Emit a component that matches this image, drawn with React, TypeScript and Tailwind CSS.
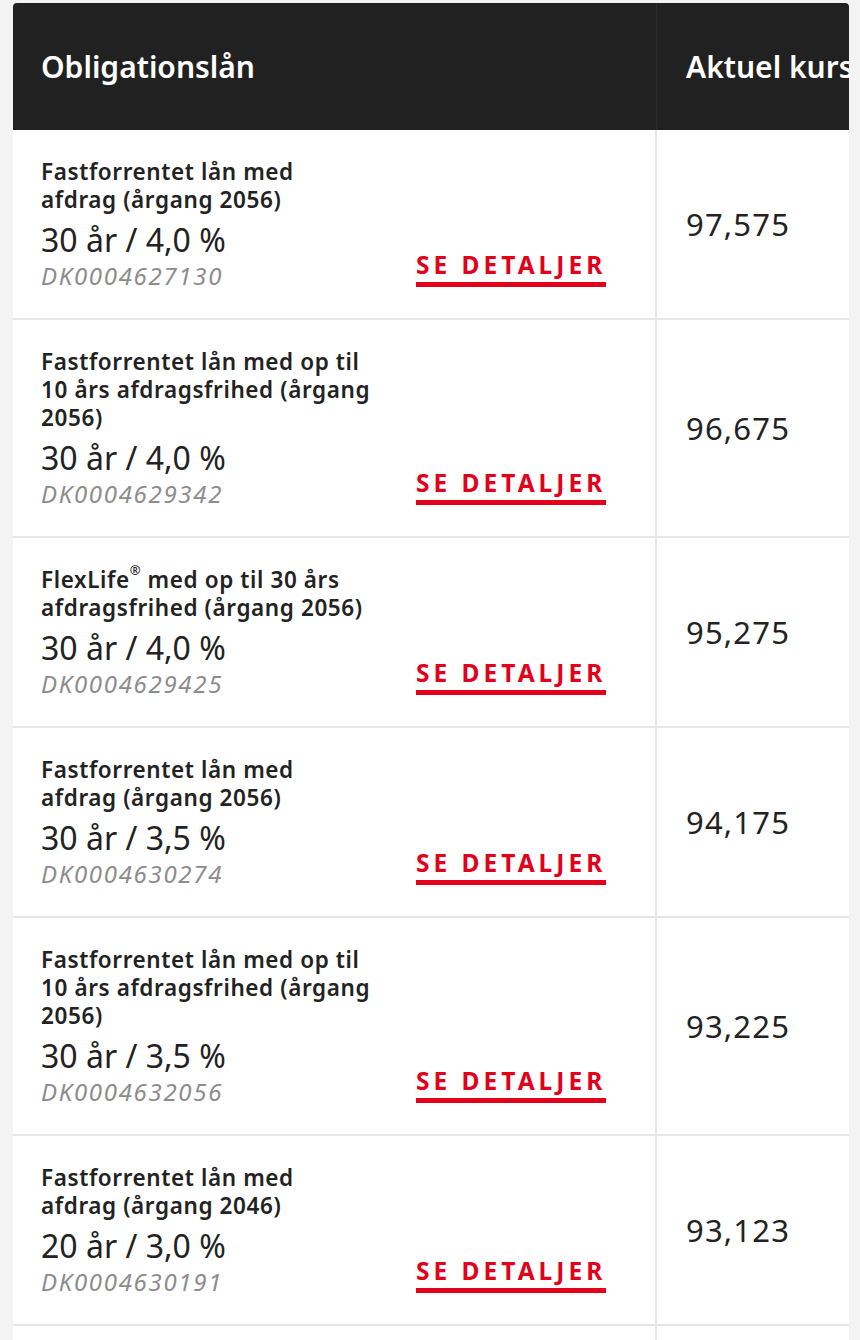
const ROWS = [
  { title: ["Fastforrentet lån med", "afdrag (årgang 2056)"], term: "30 år / 4,0 %", isin: "DK0004627130", price: "97,575" },
  { title: ["Fastforrentet lån med op til", "10 års afdragsfrihed (årgang", "2056)"], term: "30 år / 4,0 %", isin: "DK0004629342", price: "96,675" },
  { title: ["FlexLife® med op til 30 års", "afdragsfrihed (årgang 2056)"], term: "30 år / 4,0 %", isin: "DK0004629425", price: "95,275" },
  { title: ["Fastforrentet lån med", "afdrag (årgang 2056)"], term: "30 år / 3,5 %", isin: "DK0004630274", price: "94,175" },
  { title: ["Fastforrentet lån med op til", "10 års afdragsfrihed (årgang", "2056)"], term: "30 år / 3,5 %", isin: "DK0004632056", price: "93,225" },
  { title: ["Fastforrentet lån med", "afdrag (årgang 2046)"], term: "20 år / 3,0 %", isin: "DK0004630191", price: "93,123" },
];

function TitleLine({ text }: { text: string }) {
  if (!text.includes("®")) return <span className="block">{text}</span>;
  const [a, b] = text.split("®");
  return (
    <span className="block">
      {a}
      <sup className="text-[13px] align-[7px]">®</sup>
      {b}
    </span>
  );
}

export default function App() {
  return (
    <div
      className="min-h-screen bg-[#f3f3f3] pt-[3px] pl-[13px] pr-[11px]"
      style={{ fontFamily: "'Noto Sans', 'Open Sans', sans-serif" }}
    >
      <div className="w-[836px] overflow-hidden rounded-t-[4px] bg-white">
        {/* Header */}
        <div className="flex h-[127px] bg-[#212121] text-white">
          <div className="flex w-[644px] shrink-0 items-center border-r border-[#2c2c2c] pl-[28px] text-[30px] font-semibold">
            Obligationslån
          </div>
          <div className="flex flex-1 items-center overflow-hidden whitespace-nowrap pl-[29px] text-[30px] font-semibold">
            Aktuel kurs
          </div>
        </div>

        {/* Rows */}
        {ROWS.map((r) => (
          <div key={r.isin} className="flex border-b-2 border-[#e6e6e6]">
            <div className="flex w-[644px] shrink-0 border-r-2 border-[#e6e6e6] pt-[28px] pb-[28px] pl-[28px]">
              <div className="w-[375px] shrink-0">
                <div className="text-[22.5px] font-semibold leading-[28px] tracking-[0.6px] text-[#222]">
                  {r.title.map((t) => (
                    <TitleLine key={t} text={t} />
                  ))}
                </div>
                <div className="mt-[4px] text-[32px] leading-[44px] text-[#222]">{r.term}</div>
                <div className="text-[24px] italic leading-[28px] tracking-[1.7px] text-[#8c8c8c]">{r.isin}</div>
              </div>
              <a className="mb-[3px] self-end border-b-[5px] border-[#e2001a] pb-[3px] text-[24.5px] font-bold leading-[28px] tracking-[4px] text-[#e2001a]">
                SE DETALJER
              </a>
            </div>
            <div className="flex flex-1 items-center pl-[29px] text-[31px] tracking-[1.2px] text-[#222]">{r.price}</div>
          </div>
        ))}
        <div className="flex h-[20px]">
          <div className="w-[644px] shrink-0 border-r-2 border-[#e6e6e6]" />
        </div>
      </div>
    </div>
  );
}
